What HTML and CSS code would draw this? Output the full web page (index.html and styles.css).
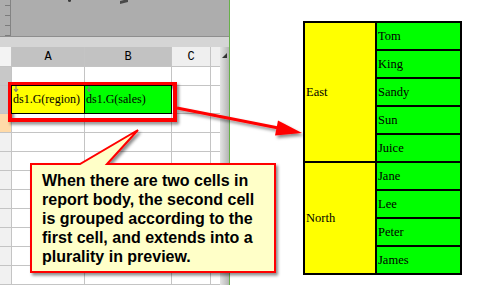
FILE: index.html
```html
<!DOCTYPE html>
<html>
<head>
<meta charset="utf-8">
<link rel="stylesheet" href="styles.css">
</head>
<body>
<div class="page">
  <div class="sheet">
    <div class="toolbar">
      <div class="ruler"><div class="ticks"></div></div>
      <span class="mark m1"></span>
      <span class="mark m2"></span>
    </div>
    <div class="band"></div>
    <div class="body">
      <div class="grid">
        <div class="corner"></div><div class="colh sel">A</div><div class="colh sel">B</div><div class="colh">C</div><div class="colh"></div>
        <div class="rowh sel"></div><div class="c"></div><div class="c"></div><div class="c"></div><div class="c"></div>
        <div class="rowh sel"></div>
        <div class="c cell yellow"><svg class="flag" width="6" height="6" viewBox="0 0 6 6"><path d="M3 0V5M1 3L3 5.5L5 3" fill="none" stroke="#7a7a7a" stroke-width="1.2"/></svg>ds1.G(region)</div>
        <div class="c cell green"><svg class="flag" width="6" height="6" viewBox="0 0 6 6"><path d="M3 0V5M1 3L3 5.5L5 3" fill="none" stroke="#7a7a7a" stroke-width="1.2"/></svg>ds1.G(sales)</div>
        <div class="c"></div><div class="c"></div>
        <div class="rowh cur"></div><div class="c"></div><div class="c"></div><div class="c"></div><div class="c"></div>
        <div class="rowh"></div><div class="c"></div><div class="c"></div><div class="c"></div><div class="c"></div>
        <div class="rowh"></div><div class="c"></div><div class="c"></div><div class="c"></div><div class="c"></div>
        <div class="rowh"></div><div class="c"></div><div class="c"></div><div class="c"></div><div class="c"></div>
        <div class="rowh"></div><div class="c"></div><div class="c"></div><div class="c"></div><div class="c"></div>
        <div class="rowh"></div><div class="c"></div><div class="c"></div><div class="c"></div><div class="c"></div>
        <div class="rowh"></div><div class="c"></div><div class="c"></div><div class="c"></div><div class="c"></div>
        <div class="rowh"></div><div class="c"></div><div class="c"></div><div class="c"></div><div class="c"></div>
        <div class="rowh"></div><div class="c"></div><div class="c"></div><div class="c"></div><div class="c"></div>
        <div class="rowh"></div><div class="c"></div><div class="c"></div><div class="c"></div><div class="c"></div>
      </div>
      <div class="vscroll">
        <svg class="sbarrow" width="7" height="7" viewBox="0 0 7 7"><path d="M1 6L6 1V6Z" fill="#333"/></svg>
      </div>
    </div>
  </div>
  <div class="preview">
    <table class="report">
      <tr><td class="region" rowspan="5">East</td><td class="name">Tom</td></tr>
      <tr><td class="name">King</td></tr>
      <tr><td class="name">Sandy</td></tr>
      <tr><td class="name">Sun</td></tr>
      <tr><td class="name">Juice</td></tr>
      <tr><td class="region" rowspan="4">North</td><td class="name">Jane</td></tr>
      <tr><td class="name">Lee</td></tr>
      <tr><td class="name">Peter</td></tr>
      <tr><td class="name">James</td></tr>
    </table>
  </div>
  <svg class="annot" width="502" height="285" viewBox="0 0 502 285">
    <defs>
      <filter id="sh" filterUnits="userSpaceOnUse" x="0" y="0" width="502" height="285">
        <feDropShadow dx="2" dy="2.5" stdDeviation="1.5" flood-color="#000" flood-opacity="0.45"/>
      </filter>
    </defs>
    <rect x="10" y="84" width="165" height="36" fill="none" stroke="#ff0000" stroke-width="4" filter="url(#sh)"/>
    <g filter="url(#sh)">
      <line x1="177" y1="108" x2="281" y2="128.5" stroke="#ff0000" stroke-width="3"/>
      <polygon points="302,133 275,135.5 278,120.5" fill="#ff0000"/>
    </g>
    <path d="M31 164H80L138 130L107 164H275V272H31Z" fill="#ffffc8" stroke="#ff0000" stroke-width="2" filter="url(#sh)"/>
  </svg>
  <div class="note">When there are two cells in<br>report body, the second cell<br>is grouped according to the<br>first cell, and extends into a<br>plurality in preview.</div>
</div>
</body>
</html>
```
FILE: styles.css
```css
html, body {
  margin: 0;
  padding: 0;
  background: #ffffff;
}
.page {
  position: relative;
  width: 502px;
  height: 285px;
  overflow: hidden;
  display: flex;
  flex-direction: row;
}
.sheet {
  width: 229px;
  height: 285px;
  border-right: 1px solid #67b04a;
  display: flex;
  flex-direction: column;
  flex: none;
}
.toolbar {
  height: 36px;
  background: #adadad;
  border-bottom: 1px solid #8e8e8e;
  display: flex;
  flex-direction: row;
  align-items: flex-start;
  flex: none;
}
.ruler {
  width: 10px;
  height: 36px;
  border-right: 1px solid #838383;
  display: flex;
  justify-content: flex-end;
}
.ticks {
  width: 5px;
  height: 36px;
  background: repeating-linear-gradient(to bottom, transparent 0 5px, #7c7c7c 5px 6px, transparent 6px 10px);
}
.mark {
  display: block;
  background: #3c3c3c;
}
.m1 {
  margin-left: 57px;
  width: 3px;
  height: 2px;
  border-radius: 0 0 2px 2px;
}
.m2 {
  margin-left: 49px;
  width: 8px;
  height: 3px;
  transform: skewY(-15deg);
  background: #4a4a4a;
}
.band {
  height: 10px;
  background: #d5d5d5;
  flex: none;
}
.body {
  flex: 1;
  display: flex;
  flex-direction: row;
  min-height: 0;
}
.grid {
  width: 220px;
  display: grid;
  grid-template-columns: 11px 72px 86px 38px 9px;
  grid-template-rows: 19px 18px 27px repeat(10, 18px);
  gap: 1px;
  background: #c4c4c4;
  align-content: start;
}
.corner {
  background: #f3f3f3;
}
.colh {
  background: #efefef;
  font-family: "Liberation Mono", "DejaVu Sans Mono", monospace;
  font-size: 12px;
  color: #000;
  display: flex;
  align-items: center;
  justify-content: center;
}
.colh.sel {
  background: #c2c2c2;
}
.rowh {
  background: #f1f1f1;
}
.rowh.sel {
  background: #c8c8c8;
}
.rowh.cur {
  background: #ffdaa8;
}
.c {
  background: #ffffff;
}
.cell {
  position: relative;
  box-shadow: 0 0 0 1px #000;
  font-family: "Liberation Serif", "Times New Roman", serif;
  font-size: 12px;
  color: #000;
  display: flex;
  align-items: center;
  padding-left: 1px;
  white-space: nowrap;
  z-index: 1;
}
.yellow {
  background: #ffff00;
}
.green {
  background: #00ff00;
}
.flag {
  position: absolute;
  left: 1px;
  top: 0;
}
.vscroll {
  width: 9px;
  background: linear-gradient(to right, #e4e4e4, #b4b4b4);
  display: flex;
  flex-direction: column;
  align-items: center;
  padding-top: 5px;
}
.preview {
  flex: 1;
  padding: 21px 0 0 73px;
}
.report {
  border-collapse: collapse;
  font-family: "Liberation Serif", "Times New Roman", serif;
  font-size: 12.5px;
  color: #000;
}
.report td {
  border: 2px solid #000;
  height: 26px;
  padding: 0 0 0 1px;
  vertical-align: middle;
  background: #00ff00;
}
.report td.region {
  width: 69px;
  background: #ffff00;
}
.report td.name {
  width: 82px;
}
.annot {
  position: absolute;
  left: 0;
  top: 0;
  pointer-events: none;
}
.note {
  position: absolute;
  left: 42px;
  top: 171px;
  font-family: "Liberation Sans", Arial, sans-serif;
  font-weight: bold;
  font-size: 16px;
  line-height: 19px;
  color: #000;
  white-space: nowrap;
}
```
